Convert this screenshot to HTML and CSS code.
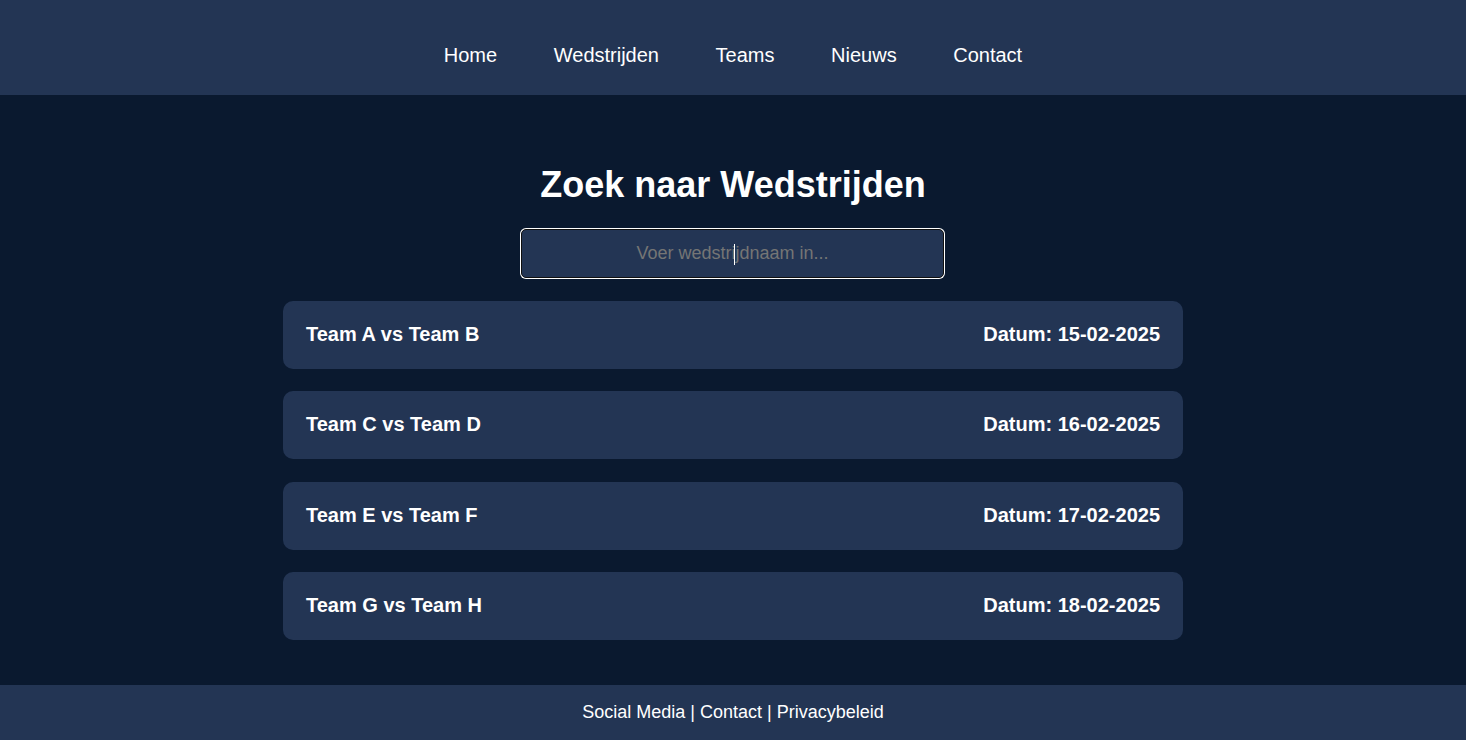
FILE: index.html
```html
<!DOCTYPE html>
<html lang="nl">
<head>
<meta charset="utf-8">
<title>Wedstrijden</title>
<link rel="stylesheet" href="styles.css">
</head>
<body>
<header class="site-header">
  <nav class="nav">
    <a href="#" class="nav-link">Home</a>
    <a href="#" class="nav-link">Wedstrijden</a>
    <a href="#" class="nav-link">Teams</a>
    <a href="#" class="nav-link">Nieuws</a>
    <a href="#" class="nav-link">Contact</a>
  </nav>
</header>
<main class="main">
  <h1 class="title">Zoek naar Wedstrijden</h1>
  <div class="search-wrap">
    <input class="search" type="text" placeholder="Voer wedstrijdnaam in...">
  </div>
  <div class="matches">
    <div class="match"><span>Team A vs Team B</span><span>Datum: 15-02-2025</span></div>
    <div class="match"><span>Team C vs Team D</span><span>Datum: 16-02-2025</span></div>
    <div class="match"><span>Team E vs Team F</span><span>Datum: 17-02-2025</span></div>
    <div class="match"><span>Team G vs Team H</span><span>Datum: 18-02-2025</span></div>
  </div>
</main>
<footer class="site-footer">Social Media | Contact | Privacybeleid</footer>
</body>
</html>
```
FILE: styles.css
```css
* { box-sizing: border-box; }
html, body { margin: 0; padding: 0; }
body {
  font-family: "Liberation Sans", Arial, sans-serif;
  background: #0a192f;
  color: #ffffff;
  min-height: 100vh;
  display: flex;
  flex-direction: column;
}
.site-header {
  background: #233554;
  height: 95px;
  padding-top: 44px;
}
.nav {
  display: flex;
  justify-content: center;
  gap: 56.6px;
}
.nav-link {
  color: #ffffff;
  text-decoration: none;
  font-size: 20px;
  line-height: 23px;
}
.main {
  flex: 1;
  display: flex;
  flex-direction: column;
  align-items: center;
  padding-top: 69px;
}
.title {
  margin: 0;
  font-size: 36px;
  line-height: 41px;
  font-weight: bold;
}
.search-wrap {
  position: relative;
  margin-top: 24px;
  margin-right: 1px;
}
.search-wrap::after {
  content: "";
  position: absolute;
  left: 213px;
  top: 15px;
  width: 1px;
  height: 21px;
  background: #ffffff;
}
.search {
  display: block;
  width: 423px;
  height: 49px;
  background: #233554;
  border: 1px solid #101010;
  border-radius: 5px;
  box-shadow: 0 0 0 1px #ffffff;
  outline: none;
  color: #ffffff;
  caret-color: #ffffff;
  font-family: "Liberation Sans", Arial, sans-serif;
  font-size: 18px;
  text-align: center;
  padding: 0;
}
.search::placeholder { color: #757575; }
.matches {
  margin-top: 23px;
  width: 900px;
  display: flex;
  flex-direction: column;
  gap: 22.4px;
}
.match {
  background: #233554;
  border-radius: 10px;
  height: 68px;
  padding: 0 23px 1px;
  display: flex;
  align-items: center;
  justify-content: space-between;
  font-size: 20px;
  font-weight: bold;
}
.site-footer {
  background: #233554;
  height: 55px;
  display: flex;
  align-items: center;
  justify-content: center;
  font-size: 18px;
}
```
